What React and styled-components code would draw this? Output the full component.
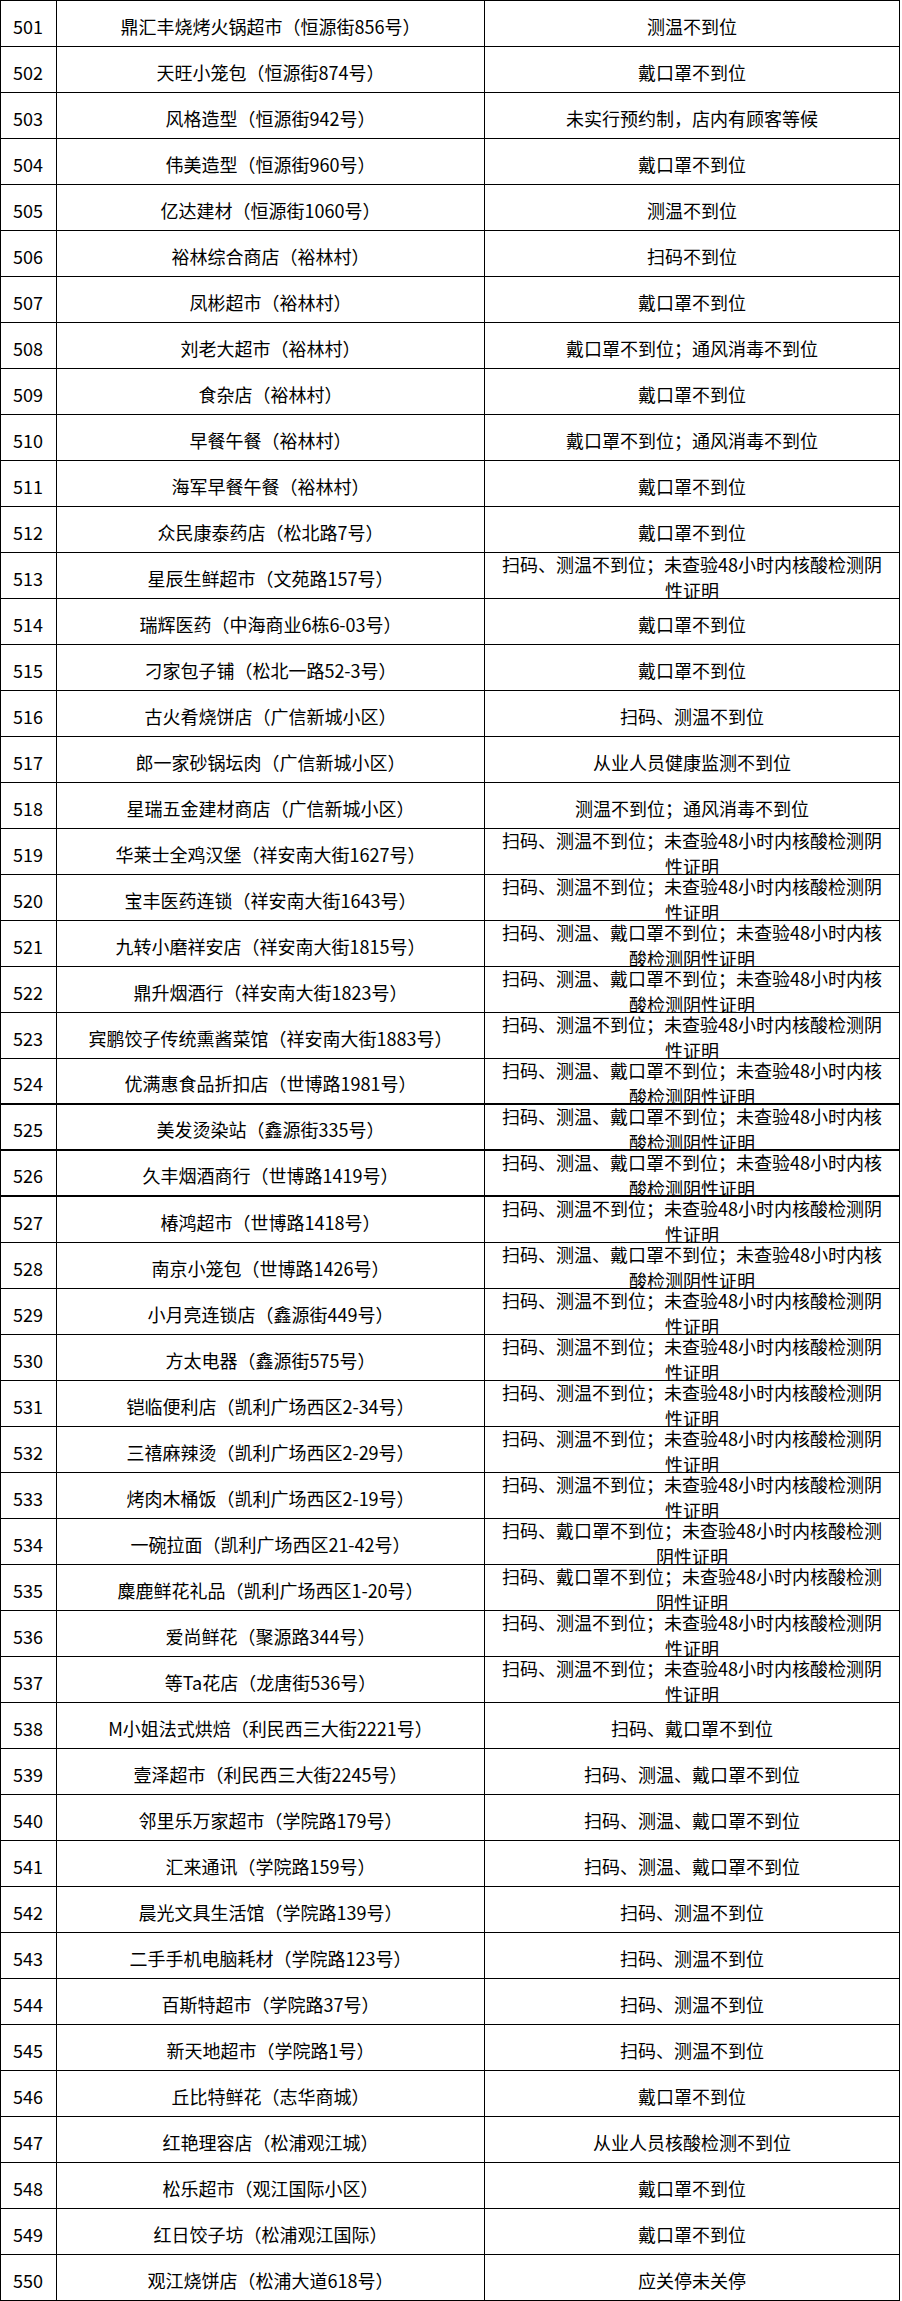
import styled, { createGlobalStyle } from 'styled-components';

const GlobalStyle = createGlobalStyle`
  html, body {
    margin: 0;
    padding: 0;
    background: #fff;
  }
  body {
    font-family: "Noto Sans CJK SC", "Noto Sans", sans-serif;
    color: #000;
  }
`;

const A = '扫码、测温不到位；未查验48小时内核酸检测阴\n性证明';
const B = '扫码、测温、戴口罩不到位；未查验48小时内核\n酸检测阴性证明';
const C = '扫码、戴口罩不到位；未查验48小时内核酸检测\n阴性证明';

const ROWS = [
    ['501', '鼎汇丰烧烤火锅超市（恒源街856号）', '测温不到位'],
    ['502', '天旺小笼包（恒源街874号）', '戴口罩不到位'],
    ['503', '风格造型（恒源街942号）', '未实行预约制，店内有顾客等候'],
    ['504', '伟美造型（恒源街960号）', '戴口罩不到位'],
    ['505', '亿达建材（恒源街1060号）', '测温不到位'],
    ['506', '裕林综合商店（裕林村）', '扫码不到位'],
    ['507', '凤彬超市（裕林村）', '戴口罩不到位'],
    ['508', '刘老大超市（裕林村）', '戴口罩不到位；通风消毒不到位'],
    ['509', '食杂店（裕林村）', '戴口罩不到位'],
    ['510', '早餐午餐（裕林村）', '戴口罩不到位；通风消毒不到位'],
    ['511', '海军早餐午餐（裕林村）', '戴口罩不到位'],
    ['512', '众民康泰药店（松北路7号）', '戴口罩不到位'],
    ['513', '星辰生鲜超市（文苑路157号）', A],
    ['514', '瑞辉医药（中海商业6栋6-03号）', '戴口罩不到位'],
    ['515', '刁家包子铺（松北一路52-3号）', '戴口罩不到位'],
    ['516', '古火肴烧饼店（广信新城小区）', '扫码、测温不到位'],
    ['517', '郎一家砂锅坛肉（广信新城小区）', '从业人员健康监测不到位'],
    ['518', '星瑞五金建材商店（广信新城小区）', '测温不到位；通风消毒不到位'],
    ['519', '华莱士全鸡汉堡（祥安南大街1627号）', A],
    ['520', '宝丰医药连锁（祥安南大街1643号）', A],
    ['521', '九转小磨祥安店（祥安南大街1815号）', B],
    ['522', '鼎升烟酒行（祥安南大街1823号）', B],
    ['523', '宾鹏饺子传统熏酱菜馆（祥安南大街1883号）', A],
    ['524', '优满惠食品折扣店（世博路1981号）', B],
    ['525', '美发烫染站（鑫源街335号）', B],
    ['526', '久丰烟酒商行（世博路1419号）', B],
    ['527', '椿鸿超市（世博路1418号）', A],
    ['528', '南京小笼包（世博路1426号）', B],
    ['529', '小月亮连锁店（鑫源街449号）', A],
    ['530', '方太电器（鑫源街575号）', A],
    ['531', '铠临便利店（凯利广场西区2-34号）', A],
    ['532', '三禧麻辣烫（凯利广场西区2-29号）', A],
    ['533', '烤肉木桶饭（凯利广场西区2-19号）', A],
    ['534', '一碗拉面（凯利广场西区21-42号）', C],
    ['535', '麋鹿鲜花礼品（凯利广场西区1-20号）', C],
    ['536', '爱尚鲜花（聚源路344号）', A],
    ['537', '等Ta花店（龙唐街536号）', A],
    ['538', 'M小姐法式烘焙（利民西三大街2221号）', '扫码、戴口罩不到位'],
    ['539', '壹泽超市（利民西三大街2245号）', '扫码、测温、戴口罩不到位'],
    ['540', '邻里乐万家超市（学院路179号）', '扫码、测温、戴口罩不到位'],
    ['541', '汇来通讯（学院路159号）', '扫码、测温、戴口罩不到位'],
    ['542', '晨光文具生活馆（学院路139号）', '扫码、测温不到位'],
    ['543', '二手手机电脑耗材（学院路123号）', '扫码、测温不到位'],
    ['544', '百斯特超市（学院路37号）', '扫码、测温不到位'],
    ['545', '新天地超市（学院路1号）', '扫码、测温不到位'],
    ['546', '丘比特鲜花（志华商城）', '戴口罩不到位'],
    ['547', '红艳理容店（松浦观江城）', '从业人员核酸检测不到位'],
    ['548', '松乐超市（观江国际小区）', '戴口罩不到位'],
    ['549', '红日饺子坊（松浦观江国际）', '戴口罩不到位'],
    ['550', '观江烧饼店（松浦大道618号）', '应关停未关停'],
];

// rows whose lower rule is drawn heavier in the scan
const THICK = ['524', '525', '526'];

const Table = styled.div`
  display: grid;
  grid-template-columns: 56px 428px 415px;
  grid-auto-rows: 46px;
  width: 900px;
  border-left: 1px solid #000;
  border-top: 1px solid #000;
  box-sizing: border-box;
`;

const Row = styled.div`
  display: contents;
`;

const Cell = styled.div`
  box-sizing: border-box;
  border-right: 1px solid #000;
  border-bottom: ${p => (p.$thick ? '2px' : '1px')} solid #000;
  overflow: hidden;
  display: flex;
  flex-direction: column;
  align-items: ${p => (p.$num ? 'flex-start' : 'center')};
  justify-content: ${p => (p.$multi ? 'flex-start' : 'center')};
  padding: ${p => (p.$multi ? '0' : '4px 0 0')};
  padding-left: ${p => (p.$num ? '12px' : '0')};
  font-size: 18px;
  line-height: 26px;
  white-space: nowrap;
  text-align: center;
`;

const Line = styled.span`
  display: block;
  margin-top: ${p => (p.$first && p.$multi ? '-2px' : '0')};
`;

function App() {
    return (
        <>
            <GlobalStyle />
            <Table>
                {ROWS.map(([no, name, remark]) => {
                    const thick = THICK.includes(no);
                    const lines = remark.split('\n');
                    const multi = lines.length > 1;
                    return (
                        <Row key={no}>
                            <Cell $num $thick={thick}>{no}</Cell>
                            <Cell $thick={thick}>{name}</Cell>
                            <Cell $thick={thick} $multi={multi}>
                                {lines.map((l, i) => (
                                    <Line key={i} $first={i === 0} $multi={multi}>{l}</Line>
                                ))}
                            </Cell>
                        </Row>
                    );
                })}
            </Table>
        </>
    );
}

export default App;
